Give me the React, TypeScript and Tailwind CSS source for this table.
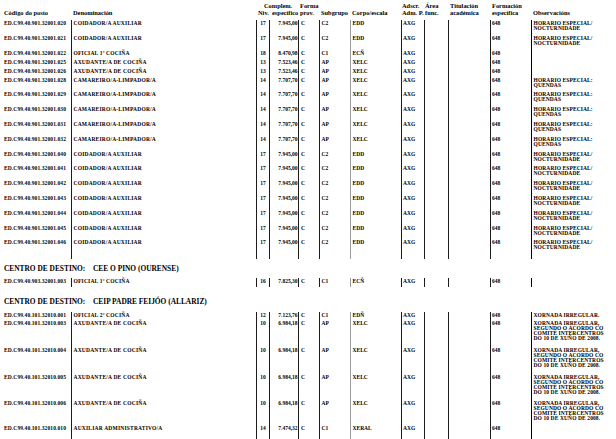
type Row = {
  code: string;
  den: string;
  niv: string;
  comp: string;
  sub: string;
  corpo: string;
  obs: string[];
  h: string;
};

const COLS =
  "grid grid-cols-[71px_185px_13px_29px_21px_31px_51px_23px_24px_42px_41px_85px]";

const ESP = ["HORARIO ESPECIAL/", "NOCTURNIDADE"];
const QUE = ["HORARIO ESPECIAL:", "QUENDAS"];
const XOR = [
  "XORNADA IRREGULAR,",
  "SEGUNDO O ACORDO CO",
  "COMITÉ INTERCENTROS",
  "DO 10 DE XUÑO DE 2008.",
];

const coid = (n: string): Row => ({
  code: `ED.C99.40.901.32001.${n}`,
  den: "COIDADOR/A AUXILIAR",
  niv: "17",
  comp: "7.945,00",
  sub: "C2",
  corpo: "EDD",
  obs: ESP,
  h: "h-[14.8px]",
});

const cama = (n: string): Row => ({
  code: `ED.C99.40.901.32001.${n}`,
  den: "CAMAREIRO/A-LIMPADOR/A",
  niv: "14",
  comp: "7.707,70",
  sub: "AP",
  corpo: "XELC",
  obs: QUE,
  h: "h-[14.8px]",
});

const axu = (n: string, h: string): Row => ({
  code: `ED.C99.40.901.32001.${n}`,
  den: "AXUDANTE/A DE COCIÑA",
  niv: "13",
  comp: "7.523,46",
  sub: "AP",
  corpo: "XELC",
  obs: [],
  h,
});

const section1: Row[] = [
  coid("020"),
  coid("021"),
  {
    code: "ED.C99.40.901.32001.022",
    den: "OFICIAL 1ª COCIÑA",
    niv: "18",
    comp: "8.470,98",
    sub: "C1",
    corpo: "ECÑ",
    obs: [],
    h: "h-[9px]",
  },
  axu("025", "h-[9px]"),
  axu("026", "h-[9px]"),
  cama("028"),
  cama("029"),
  cama("030"),
  cama("031"),
  cama("032"),
  coid("040"),
  coid("041"),
  coid("042"),
  coid("043"),
  coid("044"),
  coid("045"),
  coid("046"),
];

const section2: Row[] = [
  {
    code: "ED.C99.40.903.32001.003",
    den: "OFICIAL 1ª COCIÑA",
    niv: "16",
    comp: "7.825,30",
    sub: "C1",
    corpo: "ECÑ",
    obs: [],
    h: "h-[9px]",
  },
];

const axu3 = (n: string, h: string): Row => ({
  code: `ED.C99.40.101.32010.${n}`,
  den: "AXUDANTE/A DE COCIÑA",
  niv: "10",
  comp: "6.984,18",
  sub: "AP",
  corpo: "XELC",
  obs: XOR,
  h,
});

const section3: Row[] = [
  {
    code: "ED.C99.40.101.32010.001",
    den: "OFICIAL 2ª COCIÑA",
    niv: "12",
    comp: "7.123,76",
    sub: "C1",
    corpo: "EDÑ",
    obs: ["XORNADA IRREGULAR."],
    h: "h-[8px]",
  },
  axu3("003", "h-[27px]"),
  axu3("004", "h-[27px]"),
  axu3("005", "h-[26.5px]"),
  axu3("006", "h-[25px]"),
  {
    code: "ED.C99.40.101.32010.010",
    den: "AUXILIAR ADMINISTRATIVO/A",
    niv: "14",
    comp: "7.474,32",
    sub: "C1",
    corpo: "XERAL",
    obs: [],
    h: "h-[14px]",
  },
];

function TableRow({ r }: { r: Row }) {
  return (
    <div className={`${COLS} ${r.h} text-[5.5px] leading-[5px] font-bold whitespace-nowrap`}>
      <div className="pl-[4px] pt-[1px] tracking-[0.1px]">{r.code}</div>
      <div className="border-l border-[#1c1c1c] pl-[1.5px] pt-[1px] tracking-[0.2px]">{r.den}</div>
      <div className="border-l border-[#1c1c1c] pt-[1px] text-center">{r.niv}</div>
      <div className="border-l border-[#1c1c1c] pt-[1px] pr-[0.5px] text-right">{r.comp}</div>
      <div className="border-l border-[#1c1c1c] pl-[2px] pt-[1px]">C</div>
      <div className="border-l border-[#1c1c1c] pl-[1.5px] pt-[1px]">{r.sub}</div>
      <div className="border-l border-[#9a9a9a] pl-[1.5px] pt-[1px]">{r.corpo}</div>
      <div className="border-l border-[#1c1c1c] pl-[1px] pt-[1px]">AXG</div>
      <div className="border-l border-[#1c1c1c]" />
      <div className="border-l border-[#1c1c1c]" />
      <div className="border-l border-[#1c1c1c] pl-[1px] pt-[1px]">648</div>
      <div className="border-l-[1.5px] border-black pl-[1.5px] pt-[1px] tracking-[0.1px]">
        {r.obs.map((l) => (
          <div key={l}>{l}</div>
        ))}
      </div>
    </div>
  );
}

function Spacer({ h }: { h: string }) {
  return (
    <div className={`${COLS} ${h}`}>
      <div />
      <div className="border-l border-[#1c1c1c]" />
      <div className="border-l border-[#1c1c1c]" />
      <div className="border-l border-[#1c1c1c]" />
      <div className="border-l border-[#1c1c1c]" />
      <div className="border-l border-[#1c1c1c]" />
      <div className="border-l border-[#9a9a9a]" />
      <div className="border-l border-[#1c1c1c]" />
      <div className="border-l border-[#1c1c1c]" />
      <div className="border-l border-[#1c1c1c]" />
      <div className="border-l border-[#1c1c1c]" />
      <div className="border-l-[1.5px] border-black" />
    </div>
  );
}

function Centro({ name, h, pt }: { name: string; h: string; pt: string }) {
  return (
    <div className={`flex pl-[4px] ${h} ${pt} text-[7.4px] leading-[8px] font-bold whitespace-nowrap`}>
      <span className="w-[89px]">CENTRO DE DESTINO:</span>
      <span>{name}</span>
    </div>
  );
}

export default function App() {
  return (
    <div className="w-[616px] h-[439px] overflow-hidden bg-white text-black [font-family:'Liberation_Serif','Times_New_Roman',serif]">
      {/* Header */}
      <div className={`${COLS} h-[20px] pt-[2px] text-[6.4px] leading-[7px] font-bold whitespace-nowrap`}>
        <div className="pl-[4px] pt-[7px]">Código do posto</div>
        <div className="pl-[2px] pt-[7px]">Denominación</div>
        <div className="pl-[2px] pt-[7px]">Niv.</div>
        <div>
          <div className="ml-[-5px]">Complem.</div>
          <div className="pl-[3px]">específico</div>
        </div>
        <div className="pl-[2px]">
          <div>Forma</div>
          <div>prov.</div>
        </div>
        <div className="pl-[2px] pt-[7px]">Subgrupo</div>
        <div className="pl-[2px] pt-[7px]">Corpo/escala</div>
        <div className="pl-[1px]">
          <div>Adscr.</div>
          <div>Adm. P.</div>
        </div>
        <div className="pl-[1px]">
          <div>Área</div>
          <div>func.</div>
        </div>
        <div className="pl-[2px]">
          <div>Titulación</div>
          <div>académica</div>
        </div>
        <div className="pl-[2px]">
          <div>Formación</div>
          <div>específica</div>
        </div>
        <div className="pl-[2px] pt-[7px]">Observacións</div>
      </div>

      {section1.map((r) => (
        <TableRow key={r.code} r={r} />
      ))}
      <Spacer h="h-[5px]" />

      <Centro name="CEE O PINO (OURENSE)" h="h-[19.3px]" pt="pt-[6px]" />
      {section2.map((r) => (
        <TableRow key={r.code} r={r} />
      ))}

      <Centro name="CEIP PADRE FEIJÓO (ALLARIZ)" h="h-[24.5px]" pt="pt-[10.5px]" />
      {section3.map((r) => (
        <TableRow key={r.code} r={r} />
      ))}
    </div>
  );
}
